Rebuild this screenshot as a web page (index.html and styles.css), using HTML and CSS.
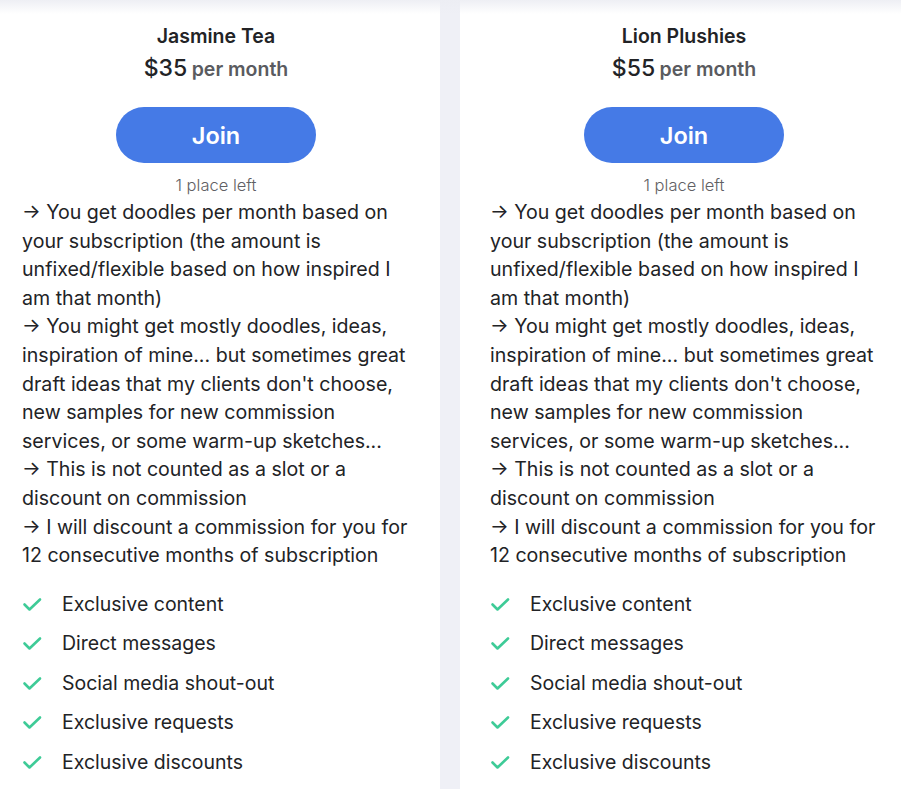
FILE: index.html
```html
<!DOCTYPE html>
<html lang="en">
<head>
<meta charset="utf-8">
<title>Tiers</title>
<link rel="stylesheet" href="styles.css">
</head>
<body>
<div class="tiers">
  <section class="tier">
    <h2 class="tier-name">Jasmine Tea</h2>
    <div class="price"><span class="amount">$35</span> <span class="period">per month</span></div>
    <button class="join">Join</button>
    <div class="left">1 place left</div>
    <div class="desc">
      <p>→ You get doodles per month based on<br>your subscription (the amount is<br>unfixed/flexible based on how inspired I<br>am that month)</p>
      <p>→ You might get mostly doodles, ideas,<br>inspiration of mine... but sometimes great<br>draft ideas that my clients don't choose,<br>new samples for new commission<br>services, or some warm-up sketches...</p>
      <p>→ This is not counted as a slot or a<br>discount on commission</p>
      <p>→ I will discount a commission for you for<br>12 consecutive months of subscription</p>
    </div>
    <ul class="benefits">
      <li><svg class="check" viewBox="0 0 20 20"><path d="M2.5 10.5l5 5L18 5.5"/></svg>Exclusive content</li>
      <li><svg class="check" viewBox="0 0 20 20"><path d="M2.5 10.5l5 5L18 5.5"/></svg>Direct messages</li>
      <li><svg class="check" viewBox="0 0 20 20"><path d="M2.5 10.5l5 5L18 5.5"/></svg>Social media shout-out</li>
      <li><svg class="check" viewBox="0 0 20 20"><path d="M2.5 10.5l5 5L18 5.5"/></svg>Exclusive requests</li>
      <li><svg class="check" viewBox="0 0 20 20"><path d="M2.5 10.5l5 5L18 5.5"/></svg>Exclusive discounts</li>
    </ul>
  </section>
  <section class="tier">
    <h2 class="tier-name">Lion Plushies</h2>
    <div class="price"><span class="amount">$55</span> <span class="period">per month</span></div>
    <button class="join">Join</button>
    <div class="left">1 place left</div>
    <div class="desc">
      <p>→ You get doodles per month based on<br>your subscription (the amount is<br>unfixed/flexible based on how inspired I<br>am that month)</p>
      <p>→ You might get mostly doodles, ideas,<br>inspiration of mine... but sometimes great<br>draft ideas that my clients don't choose,<br>new samples for new commission<br>services, or some warm-up sketches...</p>
      <p>→ This is not counted as a slot or a<br>discount on commission</p>
      <p>→ I will discount a commission for you for<br>12 consecutive months of subscription</p>
    </div>
    <ul class="benefits">
      <li><svg class="check" viewBox="0 0 20 20"><path d="M2.5 10.5l5 5L18 5.5"/></svg>Exclusive content</li>
      <li><svg class="check" viewBox="0 0 20 20"><path d="M2.5 10.5l5 5L18 5.5"/></svg>Direct messages</li>
      <li><svg class="check" viewBox="0 0 20 20"><path d="M2.5 10.5l5 5L18 5.5"/></svg>Social media shout-out</li>
      <li><svg class="check" viewBox="0 0 20 20"><path d="M2.5 10.5l5 5L18 5.5"/></svg>Exclusive requests</li>
      <li><svg class="check" viewBox="0 0 20 20"><path d="M2.5 10.5l5 5L18 5.5"/></svg>Exclusive discounts</li>
    </ul>
  </section>
</div>
</body>
</html>
```
FILE: styles.css
```css
html, body {
  margin: 0;
  padding: 0;
  background: #eff0f6;
  overflow: hidden;
}
body {
  font-family: "Inter", "Noto Sans", sans-serif;
  color: #222326;
  position: relative;
  height: 789px;
}
body::before {
  content: "";
  position: absolute;
  left: 0;
  right: 0;
  top: 0;
  height: 14px;
  background: linear-gradient(to bottom, rgba(236,237,243,0.9), rgba(255,255,255,0));
  z-index: 2;
  pointer-events: none;
}
.tiers {
  display: grid;
  grid-template-columns: 448px 448px;
  gap: 20px;
  margin-left: -8px;
}
.tier {
  background: #fff;
  padding: 23px 30px 40px;
  height: 789px;
  box-sizing: border-box;
}
.tier-name {
  margin: 0;
  font-size: 19.5px;
  line-height: 26px;
  font-weight: 600;
  text-align: center;
}
.price {
  margin-top: 3px;
  line-height: 32px;
  text-align: center;
}
.amount {
  font-size: 23px;
  font-weight: 500;
}
.period {
  font-size: 19.5px;
  font-weight: 600;
  color: #5a5b60;
}
.join {
  display: block;
  margin: 21px auto 0;
  width: 200px;
  height: 56px;
  border: 0;
  border-radius: 28px;
  background: #457ae6;
  color: #fff;
  font-family: inherit;
  font-size: 23.5px;
  font-weight: 600;
}
.left {
  margin-top: 11px;
  text-align: center;
  font-size: 16.5px;
  line-height: 22px;
  font-weight: 300;
  color: #5f6064;
}
.desc {
  margin-top: 2px;
  font-size: 19.6px;
  line-height: 28.6px;
  white-space: nowrap;
}
.desc p {
  margin: 0;
}
.benefits {
  list-style: none;
  margin: 14px 0 0;
  padding: 0;
}
.benefits li {
  display: flex;
  align-items: center;
  height: 39.6px;
  font-size: 19.5px;
}
.check {
  width: 20px;
  height: 20px;
  margin-right: 20px;
  fill: none;
  stroke: #3ecb97;
  stroke-width: 2.6;
  stroke-linecap: round;
  stroke-linejoin: round;
}
```
